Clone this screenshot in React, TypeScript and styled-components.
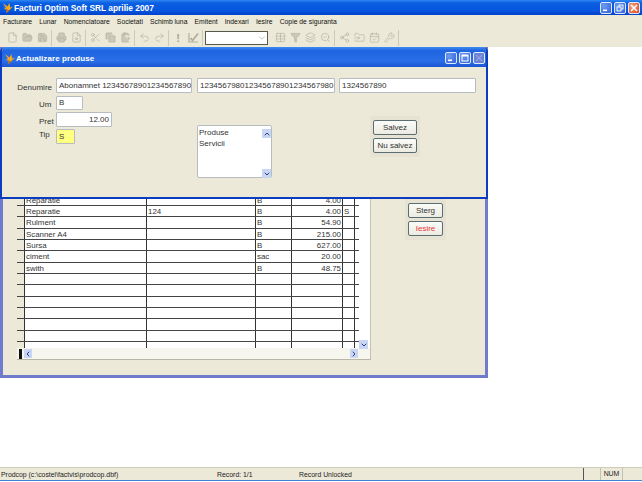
import React from 'react';
import styled, { createGlobalStyle } from 'styled-components';
import {
  File,
  FolderOpen,
  Save,
  Printer,
  FileSearch,
  Scissors,
  Copy,
  ClipboardPaste,
  Undo2,
  Redo2,
  Table,
  Filter,
  Layers,
  SearchCheck,
  Share2,
  FolderInput,
  CalendarCheck,
  Wrench,
  ChevronUp,
  ChevronDown,
  ChevronLeft,
  ChevronRight,
} from 'lucide-react';

const FONT = `"Liberation Sans", Arial, sans-serif`;
const BEIGE = '#ece9d8';

const GlobalStyle = createGlobalStyle`
  html, body {
    margin: 0;
    padding: 0;
    background: #fff;
    overflow: hidden;
  }
`;

const Page = styled.div`
  width: 642px;
  height: 482px;
  display: flex;
  flex-direction: column;
  font-family: ${FONT};
  font-size: 8px;
  color: #222;
  overflow: hidden;
`;

const TitleBar = styled.div<{ $dialog?: boolean }>`
  height: ${(p) => (p.$dialog ? '20px' : '15px')};
  box-sizing: border-box;
  flex: none;
  display: flex;
  align-items: center;
  padding: ${(p) => (p.$dialog ? '2px 3px 0 4px' : '0 2px 0 2px')};
  background: ${(p) =>
    p.$dialog
      ? 'linear-gradient(180deg, #3f8cf3 0%, #1f64e0 18%, #2a6fe8 70%, #1a55d0 100%)'
      : 'linear-gradient(180deg, #2f86f0 0%, #0a5fe2 20%, #0656e0 70%, #0340c8 100%)'};
`;

const TitleText = styled.span<{ $dialog?: boolean }>`
  flex: 1;
  margin-left: 1px;
  font-size: ${(p) => (p.$dialog ? '8px' : '8.4px')};
  letter-spacing: ${(p) => (p.$dialog ? '0.1px' : '0')};
  font-weight: bold;
  color: #fff;
  white-space: nowrap;
`;

const WinButtons = styled.div`
  display: flex;
  gap: 2px;
`;

const WinButton = styled.div<{ $kind: 'min' | 'max' | 'close' | 'off' }>`
  width: 12px;
  height: 12px;
  border: 1px solid #dfe8fb;
  border-radius: 2px;
  box-sizing: border-box;
  position: relative;
  background: ${(p) =>
    p.$kind === 'close'
      ? 'radial-gradient(circle at 30% 30%, #f0a080, #d8481c)'
      : p.$kind === 'off'
        ? '#6a82d8'
        : 'radial-gradient(circle at 30% 30%, #6f9cf2, #2d5fd8)'};
`;

const WinGlyph = styled.svg`
  position: absolute;
  inset: 0;
  width: 100%;
  height: 100%;
`;

const MenuBar = styled.div`
  height: 13px;
  flex: none;
  display: flex;
  align-items: center;
  gap: 7.1px;
  padding-left: 3px;
  background: ${BEIGE};
  font-size: 6.8px;
  color: #111;
  white-space: nowrap;
`;

const Toolbar = styled.div`
  height: 19px;
  flex: none;
  display: flex;
  align-items: center;
  padding-left: 3px;
  background: ${BEIGE};
  color: #b2af9f;
`;

const ToolGroup = styled.div`
  height: 16px;
  display: flex;
  align-items: center;
  padding: 0 1.5px;
  border-right: 1px solid #cdcab8;
  & > * {
    margin: 0 2px;
    flex: none;
  }
`;

const ToolBang = styled.span`
  width: 11px;
  text-align: center;
  font-size: 11px;
  font-weight: bold;
  color: #a8a595;
`;

const Combo = styled.div`
  width: 63px;
  height: 14px;
  box-sizing: border-box;
  margin-left: 2px;
  margin-right: 3px;
  border: 1px solid #55584a;
  background: #fff;
  display: flex;
  align-items: center;
  justify-content: flex-end;
  color: #b9b9b0;
`;

const Workspace = styled.div`
  flex: 1;
  position: relative;
  background: #fff;
`;

const BackWindow = styled.div`
  position: absolute;
  left: 0;
  top: 0;
  width: 488px;
  height: 331px;
  box-sizing: border-box;
  display: flex;
  align-items: flex-start;
  background: ${BEIGE};
  border: 3px solid #6f7ccb;
  border-top: none;
  padding-left: 14px;
`;

const GridPanel = styled.div`
  width: 354px;
  height: 299px;
  margin-top: 14px;
  flex: none;
  box-sizing: border-box;
  background: #fff;
  border-right: 1px solid #c4c2b4;
  border-bottom: 1px solid #b8b6a8;
  position: relative;
  display: flex;
  flex-direction: column;
`;

const GridBody = styled.div`
  flex: 1;
  min-height: 0;
  overflow: hidden;
  display: flex;
  flex-direction: column;
  justify-content: flex-end;
`;

const GridRow = styled.div`
  flex: none;
  height: 11.34px;
  box-sizing: border-box;
  display: grid;
  grid-template-columns: 8px 122px 109px 36px 51px 12px 4px;
  width: 342px;
  border-bottom: 1px solid #444;
  font-size: 7.9px;
  line-height: 11px;
  color: #333;
`;

const Cell = styled.div<{ $right?: boolean; $head?: boolean; $open?: boolean }>`
  box-sizing: border-box;
  padding: 0 1px;
  overflow: hidden;
  white-space: nowrap;
  text-align: ${(p) => (p.$right ? 'right' : 'left')};
  border-right: ${(p) => (p.$open ? 'none' : '1px solid #333')};
  background: ${(p) => (p.$head ? BEIGE : 'transparent')};
`;

const GridTail = styled.div`
  flex: none;
  height: 6px;
  width: 342px;
  display: grid;
  grid-template-columns: 8px 122px 109px 36px 51px 12px;
`;

const HScroll = styled.div`
  flex: none;
  height: 11px;
  box-sizing: border-box;
  background: #f6f5ee;
  display: flex;
  align-items: center;
  padding: 0 12px 0 2px;
`;

const RowMark = styled.div`
  width: 3px;
  height: 10px;
  background: #111;
  margin-right: 2px;
`;

const ArrowBox = styled.div`
  width: 8px;
  height: 9px;
  background: #c8d6f4;
  color: #2a3f80;
  display: flex;
  align-items: center;
  justify-content: center;
`;

const ScrollGap = styled.div`
  flex: 1;
`;

const VScrollDown = styled(ArrowBox)`
  position: absolute;
  right: 2px;
  bottom: 10px;
  width: 9px;
`;

const ButtonGroup = styled.div`
  flex: none;
  margin-left: 34px;
  margin-top: 140px;
  width: 41px;
  height: 53px;
  box-sizing: border-box;
  padding: 16px 3px 0;
  display: flex;
  flex-direction: column;
  gap: 3px;
  background: #e6e3d4;
`;

const PushButton = styled.div<{ $danger?: boolean }>`
  height: 15px;
  box-sizing: border-box;
  flex: none;
  display: flex;
  align-items: center;
  justify-content: center;
  border: 1px solid #5a6e72;
  border-radius: 2px;
  background: linear-gradient(180deg, #fbfbf8, #ecebe2);
  font-size: 8px;
  color: ${(p) => (p.$danger ? '#e83838' : '#333')};
  white-space: nowrap;
`;

const Dialog = styled.div`
  position: absolute;
  left: 0;
  top: 0;
  width: 488px;
  height: 152px;
  box-sizing: border-box;
  display: flex;
  flex-direction: column;
  border-radius: 5px 5px 0 0;
  background: ${BEIGE};
  border: 2px solid #0c3cc0;
  border-top: none;
  overflow: hidden;
`;

const DialogTitle = styled(TitleBar)`
  margin: 0 -2px;
`;

const DialogBody = styled.div`
  flex: 1;
  padding: 11px 10px 0 0;
  display: flex;
  flex-direction: column;
  font-size: 8px;
`;

const TopRow = styled.div`
  display: flex;
  align-items: flex-start;
`;

const FieldLabel = styled.div<{ $shift?: number; $start?: boolean }>`
  width: 51px;
  box-sizing: border-box;
  flex: none;
  text-align: ${(p) => (p.$start ? 'left' : 'right')};
  color: #333;
  font-size: 8px;
  padding-left: ${(p) => (p.$start ? '37px' : '0')};
  padding-right: 1px;
  margin-top: ${(p) => p.$shift ?? 0}px;
`;

const TextField = styled.div<{
  $width: number;
  $height?: number;
  $right?: boolean;
  $yellow?: boolean;
  $ml?: number;
}>`
  width: ${(p) => p.$width}px;
  height: ${(p) => p.$height ?? 15}px;
  margin-left: ${(p) => p.$ml ?? 3}px;
  flex: none;
  box-sizing: border-box;
  border: 1px solid #b6bcc0;
  background: ${(p) => (p.$yellow ? '#ffff80' : '#fff')};
  padding: 0 2px;
  line-height: ${(p) => (p.$height ?? 15) - 2}px;
  white-space: nowrap;
  overflow: hidden;
  text-align: ${(p) => (p.$right ? 'right' : 'left')};
  color: #333;
  border-radius: 1px;
`;

const LowerArea = styled.div`
  display: flex;
  align-items: flex-start;
  margin-top: 3px;
`;

const FieldColumn = styled.div`
  width: 195px;
  flex: none;
  display: flex;
  flex-direction: column;
  gap: 2px;
`;

const FieldRow = styled.div`
  display: flex;
  align-items: flex-start;
`;

const ListBox = styled.div`
  width: 75px;
  height: 53px;
  margin-top: 29px;
  flex: none;
  box-sizing: border-box;
  border: 1px solid #b6bcc0;
  border-radius: 2px;
  background: #fff;
  padding: 1px 1px;
  position: relative;
  line-height: 11px;
  color: #333;
`;

const ListArrow = styled(ArrowBox)<{ $down?: boolean }>`
  position: absolute;
  right: 0;
  top: ${(p) => (p.$down ? '43px' : '3px')};
  width: 9px;
`;

const SaveGroup = styled.div`
  width: 50px;
  height: 41px;
  margin-left: 98px;
  margin-top: 20px;
  box-sizing: border-box;
  flex: none;
  padding: 4px 3px 0;
  display: flex;
  flex-direction: column;
  gap: 3px;
  background: #e6e3d4;
`;

const StatusBar = styled.div`
  height: 14px;
  box-sizing: border-box;
  flex: none;
  display: flex;
  align-items: center;
  background: ${BEIGE};
  border-top: 1px solid #cfccba;
  border-bottom: 1px solid #3f7fd8;
  margin-bottom: 1px;
  font-size: 6.9px;
  color: #222;
  white-space: nowrap;
`;

const StatusText = styled.div<{ $width: number }>`
  width: ${(p) => p.$width}px;
  flex: none;
  padding-left: 1px;
  box-sizing: border-box;
`;

const StatusCell = styled.div<{ $width: number; $dark?: boolean }>`
  width: ${(p) => p.$width}px;
  height: 100%;
  flex: none;
  box-sizing: border-box;
  border-left: 1px solid ${(p) => (p.$dark ? '#555' : '#c4c1ae')};
  text-align: center;
  line-height: 12px;
`;

const Logo = () => (
  <svg width="11" height="11" viewBox="0 0 12 12" style={{ flex: 'none' }}>
    <polygon points="1,1 6,5 8,1 9,6 12,5 8,9 5,12 5,8 2,8 4,6" fill="#f5a623" />
    <polygon points="5,8 8,9 5,12" fill="#c96a10" />
    <polygon points="1,1 4,6 2,8" fill="#3a70c8" />
  </svg>
);

const MinGlyph = () => (
  <WinGlyph viewBox="0 0 10 10">
    <rect x="2" y="6.5" width="4" height="1.6" fill="#fff" />
  </WinGlyph>
);

const MaxGlyph = () => (
  <WinGlyph viewBox="0 0 10 10">
    <rect x="2" y="2" width="6" height="6" fill="none" stroke="#fff" strokeWidth="1" />
    <rect x="2" y="2" width="6" height="1.5" fill="#fff" />
  </WinGlyph>
);

const RestoreGlyph = () => (
  <WinGlyph viewBox="0 0 10 10">
    <rect x="4" y="2" width="4" height="4" fill="none" stroke="#fff" strokeWidth="0.9" />
    <rect x="2" y="4" width="4" height="4" fill="#5f8eea" stroke="#fff" strokeWidth="0.9" />
  </WinGlyph>
);

const CloseGlyph = ({ color = '#fff' }: { color?: string }) => (
  <WinGlyph viewBox="0 0 10 10">
    <path d="M2 2 L8 8 M8 2 L2 8" stroke={color} strokeWidth="1.5" />
  </WinGlyph>
);

const CheckTool = () => (
  <svg width="11" height="11" viewBox="0 0 11 11">
    <path d="M1 1 V10 H10" fill="none" stroke="currentColor" strokeWidth="1.2" />
    <path d="M2.5 6 L4.5 8.5 L10 1.5" fill="none" stroke="currentColor" strokeWidth="1.8" />
  </svg>
);

const menus = [
  'Facturare',
  'Lunar',
  'Nomenclatoare',
  'Societati',
  'Schimb luna',
  'Emitent',
  'Indexari',
  'Iesire',
  'Copie de siguranta',
];

type Row = [string, string, string, string, string];

const rows: Row[] = [
  ['Reparatie', '', 'B', '4.00', ''],
  ['Reparatie', '124', 'B', '4.00', 'S'],
  ['Rulment', '', 'B', '54.90', ''],
  ['Scanner A4', '', 'B', '215.00', ''],
  ['Sursa', '', 'B', '627.00', ''],
  ['ciment', '', 'sac', '20.00', ''],
  ['swith', '', 'B', '48.75', ''],
  ['', '', '', '', ''],
  ['', '', '', '', ''],
  ['', '', '', '', ''],
  ['', '', '', '', ''],
  ['', '', '', '', ''],
  ['', '', '', '', ''],
];

const ICON = { size: 11, strokeWidth: 1.4 };
const FILLED = { ...ICON, fill: '#cbc8b8' };

const App = () => {
  return (
    <Page>
      <GlobalStyle />
      <TitleBar>
        <Logo />
        <TitleText>Facturi Optim Soft SRL aprilie 2007</TitleText>
        <WinButtons>
          <WinButton $kind="min"><MinGlyph /></WinButton>
          <WinButton $kind="max"><RestoreGlyph /></WinButton>
          <WinButton $kind="close"><CloseGlyph /></WinButton>
        </WinButtons>
      </TitleBar>
      <MenuBar>
        {menus.map((m) => (
          <span key={m}>{m}</span>
        ))}
      </MenuBar>
      <Toolbar>
        <ToolGroup>
          <File {...ICON} />
          <FolderOpen {...FILLED} />
          <Save {...FILLED} />
        </ToolGroup>
        <ToolGroup>
          <Printer {...FILLED} />
          <FileSearch {...ICON} />
        </ToolGroup>
        <ToolGroup>
          <Scissors {...ICON} />
          <Copy {...FILLED} />
          <ClipboardPaste {...FILLED} />
        </ToolGroup>
        <ToolGroup>
          <Undo2 {...ICON} />
          <Redo2 {...ICON} />
        </ToolGroup>
        <ToolGroup>
          <ToolBang>!</ToolBang>
          <CheckTool />
        </ToolGroup>
        <Combo>
          <ChevronDown size={10} strokeWidth={2} />
        </Combo>
        <ToolGroup>
          <Table {...ICON} />
          <Filter {...FILLED} />
          <Layers {...ICON} />
          <SearchCheck {...ICON} />
        </ToolGroup>
        <ToolGroup>
          <Share2 {...ICON} />
          <FolderInput {...ICON} />
          <CalendarCheck {...ICON} />
          <Wrench {...ICON} />
        </ToolGroup>
      </Toolbar>
      <Workspace>
        <BackWindow>
          <GridPanel>
            <GridBody>
              {rows.map((r, i) => (
                <GridRow key={i}>
                  <Cell $head />
                  <Cell>{r[0]}</Cell>
                  <Cell>{r[1]}</Cell>
                  <Cell>{r[2]}</Cell>
                  <Cell $right>{r[3]}</Cell>
                  <Cell>{r[4]}</Cell>
                  <Cell $open />
                </GridRow>
              ))}
              <GridTail>
                <Cell $head />
                <Cell />
                <Cell />
                <Cell />
                <Cell />
                <Cell />
              </GridTail>
            </GridBody>
            <HScroll>
              <RowMark />
              <ArrowBox>
                <ChevronLeft size={8} strokeWidth={3} />
              </ArrowBox>
              <ScrollGap />
              <ArrowBox>
                <ChevronRight size={8} strokeWidth={3} />
              </ArrowBox>
            </HScroll>
            <VScrollDown>
              <ChevronDown size={8} strokeWidth={3} />
            </VScrollDown>
          </GridPanel>
          <ButtonGroup>
            <PushButton>Sterg</PushButton>
            <PushButton $danger>Iesire</PushButton>
          </ButtonGroup>
        </BackWindow>
        <Dialog>
          <DialogTitle $dialog>
            <Logo />
            <TitleText $dialog>Actualizare produse</TitleText>
            <WinButtons>
              <WinButton $kind="min"><MinGlyph /></WinButton>
              <WinButton $kind="max"><MaxGlyph /></WinButton>
              <WinButton $kind="off"><CloseGlyph color="#8f9fd8" /></WinButton>
            </WinButtons>
          </DialogTitle>
          <DialogBody>
            <TopRow>
              <FieldLabel $shift={5}>Denumire</FieldLabel>
              <TextField $width={136}>Abonamnet 12345678901234567890</TextField>
              <TextField $width={138} $ml={5}>123456798012345678901234567980</TextField>
              <TextField $width={137} $ml={4}>1324567890</TextField>
            </TopRow>
            <LowerArea>
              <FieldColumn>
                <FieldRow>
                  <FieldLabel $start $shift={4}>Um</FieldLabel>
                  <TextField $width={27} $height={14}>B</TextField>
                </FieldRow>
                <FieldRow>
                  <FieldLabel $start $shift={5}>Pret</FieldLabel>
                  <TextField $width={56} $right>12.00</TextField>
                </FieldRow>
                <FieldRow>
                  <FieldLabel $start $shift={1}>Tip</FieldLabel>
                  <TextField $width={19} $yellow>S</TextField>
                </FieldRow>
              </FieldColumn>
              <ListBox>
                <div>Produse</div>
                <div>Servicii</div>
                <ListArrow>
                  <ChevronUp size={8} strokeWidth={3} />
                </ListArrow>
                <ListArrow $down>
                  <ChevronDown size={8} strokeWidth={3} />
                </ListArrow>
              </ListBox>
              <SaveGroup>
                <PushButton>Salvez</PushButton>
                <PushButton>Nu salvez</PushButton>
              </SaveGroup>
            </LowerArea>
          </DialogBody>
        </Dialog>
      </Workspace>
      <StatusBar>
        <StatusText $width={216}>Prodcop (c:\costel\factvis\prodcop.dbf)</StatusText>
        <StatusText $width={82}>Record: 1/1</StatusText>
        <StatusText $width={285}>Record Unlocked</StatusText>
        <StatusCell $width={17} $dark />
        <StatusCell $width={22}>NUM</StatusCell>
        <StatusCell $width={20} />
      </StatusBar>
    </Page>
  );
};

export default App;
